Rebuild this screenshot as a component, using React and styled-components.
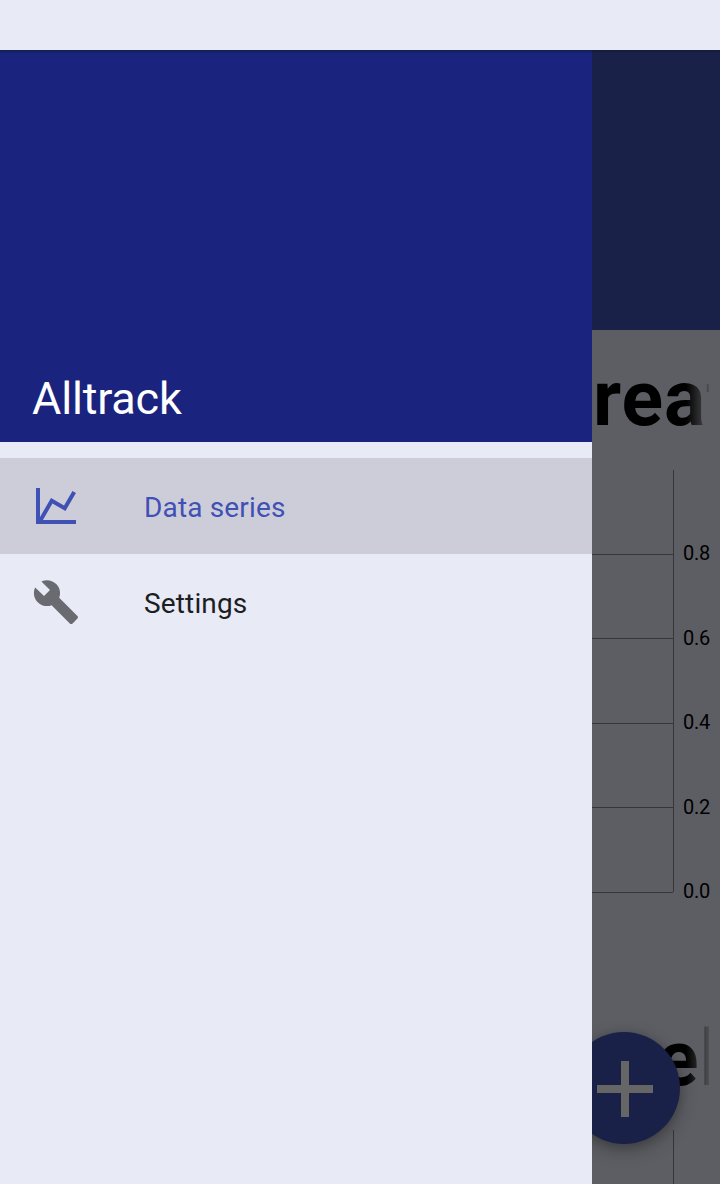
import React from "react";
import styled, { createGlobalStyle } from "styled-components";

const GlobalStyle = createGlobalStyle`
  * { box-sizing: border-box; }
  body { margin: 0; background: #e8eaf6; font-family: Roboto, sans-serif; }
`;

const Screen = styled.div`
  display: flex;
  flex-direction: column;
  width: 720px;
  height: 1184px;
  overflow: hidden;
`;

const StatusBar = styled.div`
  flex: 0 0 50px;
  background: #e8eaf6;
`;

const Body = styled.div`
  position: relative;
  flex: 1;
  display: grid;
  grid-template-columns: 592px 128px;
  min-height: 0;
`;

const TopShade = styled.div`
  position: absolute;
  z-index: 3;
  top: 0;
  left: 0;
  right: 0;
  height: 4px;
  background: linear-gradient(rgba(16, 28, 50, 0.6), rgba(16, 28, 50, 0));
`;

const Drawer = styled.nav`
  position: relative;
  z-index: 2;
  background: #e8eaf6;
`;

const DrawerHeader = styled.header`
  display: flex;
  align-items: flex-end;
  height: 392px;
  padding: 0 32px 16px;
  background: #1a237e;
`;

const AppName = styled.h1`
  margin: 0;
  color: #fff;
  font-size: 45px;
  font-weight: 400;
  line-height: 54px;
  letter-spacing: -0.2px;
`;

const Menu = styled.div`
  padding-top: 16px;
`;

const MenuItem = styled.div`
  display: flex;
  align-items: center;
  gap: 64px;
  height: 96px;
  padding: 0 32px;
  background: ${(p) => (p.$active ? "#cdcdd9" : "transparent")};
  color: ${(p) => (p.$active ? "#3f51b5" : "#1d1e1f")};

  svg {
    flex: none;
    width: 48px;
    height: 48px;
    fill: ${(p) => (p.$active ? "#3f51b5" : "#6a6b70")};
  }
`;

const MenuLabel = styled.span`
  padding-top: 3px;
  font-size: 28px;
  line-height: 34px;
  letter-spacing: 0.15px;
`;

const Content = styled.main`
  position: relative;
  z-index: 1;
  display: flex;
  flex-direction: column;
  min-width: 0;
  background: #5d5e63;
`;

const Banner = styled.div`
  flex: 0 0 280px;
  background: #1a2148;
`;

const Card = styled.section`
  flex: 0 0 660px;
`;

const CardTitle = styled.h2`
  height: 140px;
  margin: 0 11px 0 0;
  padding: 22px 0 0 ${(p) => p.$indent}px;
  color: #000;
  font-size: 77px;
  font-weight: 700;
  line-height: 94px;
  letter-spacing: 1px;
  white-space: nowrap;
  overflow: hidden;
  mask-image: linear-gradient(to right, #000 94px, transparent 121px);
`;

const Plot = styled.div`
  display: grid;
  grid-template-columns: 82px 1fr;
  align-items: start;
`;

const Grid = styled.div`
  height: 422px;
  border-right: 1px solid #36363a;
  padding-top: 0.6px;
`;

const GridCell = styled.div`
  height: 84.4px;
  border-bottom: 1px solid #36363a;
`;

const Axis = styled.div`
  padding: 71.4px 0 0 9px;
  color: #000;
  font-size: 20px;
  line-height: 24px;
  letter-spacing: -0.2px;
`;

const AxisLabel = styled.div`
  height: 84.4px;
`;

const Fab = styled.div`
  position: absolute;
  z-index: 1;
  left: -24px;
  top: 982px;
  display: flex;
  align-items: center;
  justify-content: center;
  width: 112px;
  height: 112px;
  border-radius: 50%;
  background: #1a2148;
  box-shadow: 0 6px 18px rgba(0, 0, 0, 0.3), 0 1px 8px rgba(0, 0, 0, 0.12);

  svg {
    width: 56px;
    height: 56px;
    margin: 2px 0 0 2px;
    fill: #666;
  }
`;

const ChartIcon = () => (
  <svg viewBox="0 0 24 24">
    <path d="M16,11.78L20.24,4.45L21.97,5.45L16.74,14.5L10.23,10.75L5.46,19H22V21H2V3H4V17.54L9.5,8L16,11.78Z" />
  </svg>
);

const WrenchIcon = () => (
  <svg viewBox="0 0 24 24">
    <path d="M22.7 19l-9.1-9.1c.9-2.3.4-5-1.5-6.9-2-2-5-2.4-7.4-1.3L9 6 6 9 1.6 4.7C.4 7.1.9 10.1 2.9 12.1c1.9 1.9 4.6 2.4 6.9 1.5l9.1 9.1c.4.4 1 .4 1.4 0l2.3-2.3c.5-.4.5-1.1.1-1.4z" />
  </svg>
);

const ticks = ["0.8", "0.6", "0.4", "0.2", "0.0"];

function SeriesCard({ title, indent }) {
  return (
    <Card>
      <CardTitle $indent={indent}>{title}</CardTitle>
      <Plot>
        <Grid>
          {ticks.map((t) => (
            <GridCell key={t} />
          ))}
        </Grid>
        <Axis>
          {ticks.map((t) => (
            <AxisLabel key={t}>{t}</AxisLabel>
          ))}
        </Axis>
      </Plot>
    </Card>
  );
}

export default function App() {
  return (
    <>
      <GlobalStyle />
      <Screen>
        <StatusBar />
        <Body>
          <TopShade />
          <Drawer>
            <DrawerHeader>
              <AppName>Alltrack</AppName>
            </DrawerHeader>
            <Menu>
              <MenuItem $active>
                <ChartIcon />
                <MenuLabel>Data series</MenuLabel>
              </MenuItem>
              <MenuItem>
                <WrenchIcon />
                <MenuLabel>Settings</MenuLabel>
              </MenuItem>
            </Menu>
          </Drawer>
          <Content>
            <Banner />
            <SeriesCard title="reat" indent={1} />
            <SeriesCard title="el" indent={65} />
            <Fab>
              <svg viewBox="0 0 56 56">
                <path d="M24 0h8v24h24v8H32v24h-8V32H0v-8h24z" />
              </svg>
            </Fab>
          </Content>
        </Body>
      </Screen>
    </>
  );
}
